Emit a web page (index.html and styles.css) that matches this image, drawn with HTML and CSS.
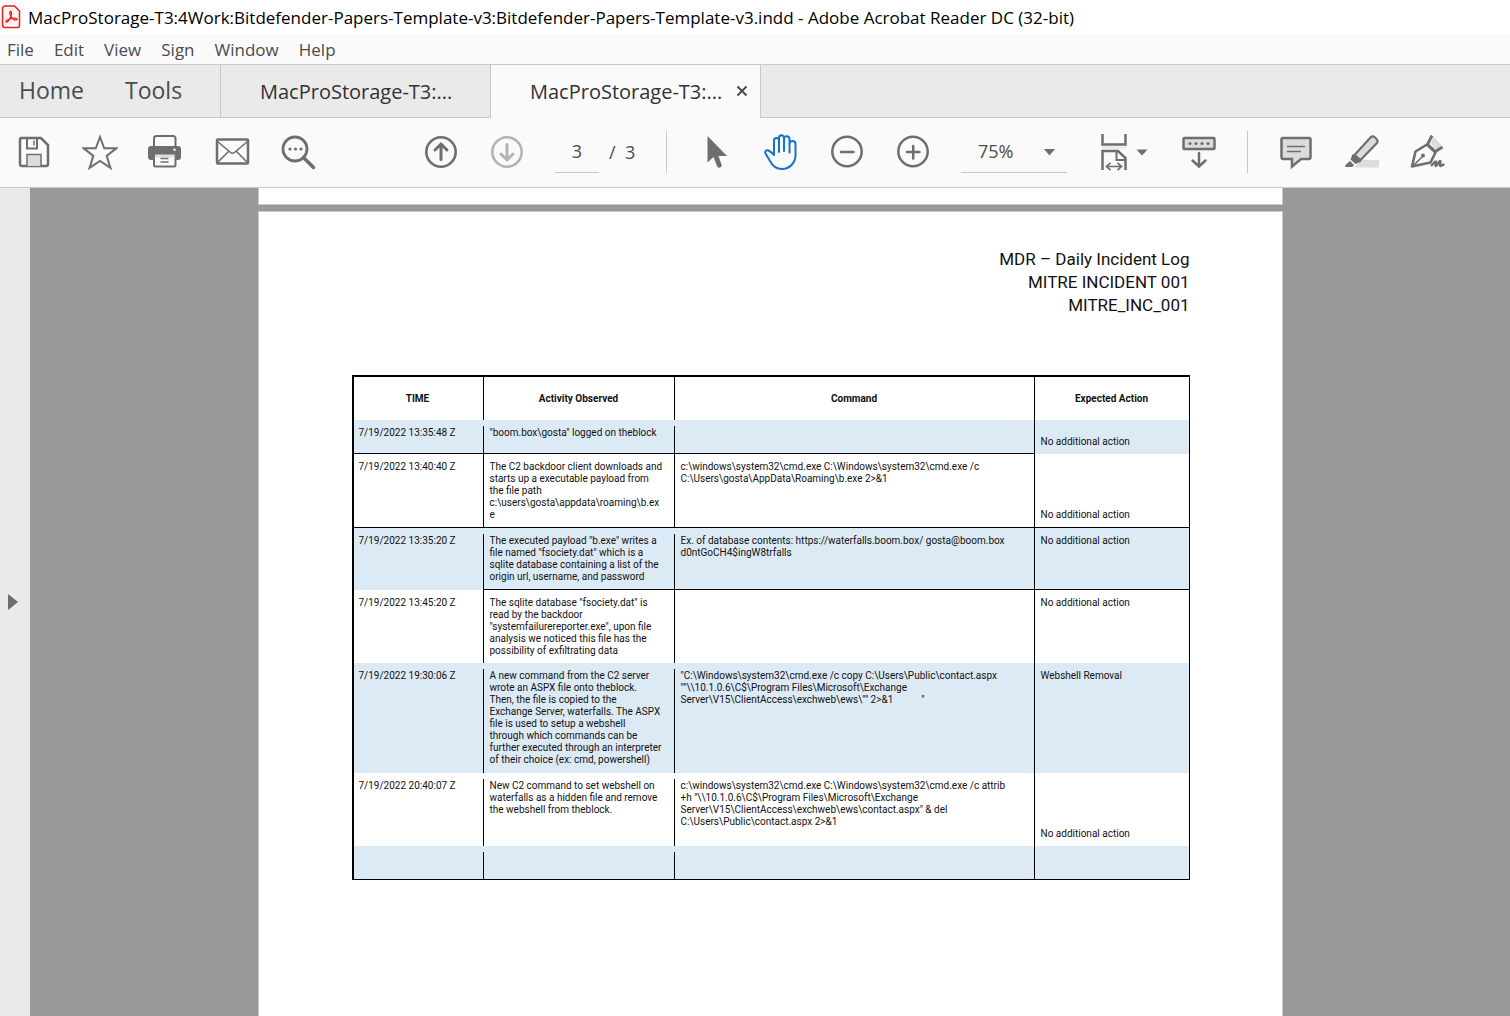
FILE: index.html
```html
<!DOCTYPE html>
<html lang="en">
<head>
<meta charset="utf-8">
<title>Adobe Acrobat Reader DC (32-bit)</title>
<link rel="stylesheet" href="styles.css">
</head>
<body>
<div class="app">
  <header class="titlebar">
    <svg class="app-icon" width="20" height="24" viewBox="0 0 20 24" fill="none" stroke="#f01e14">
      <path d="M4 1h9.500l5 5v14.500a2 2 0 0 1-2 2H4a2.500 2.500 0 0 1-2.500-2.500V3.500A2.500 2.500 0 0 1 4 1z" fill="#fff5f5" stroke-width="1.500"/>
      <path d="M9.700 6.500c-1.300 0-1.200 1.900-.3 3.800 1.200 2.700 3.400 4.800 5.400 4.900 1.700 0 1.400-1.900-.7-2.100-2.500-.2-5 .5-7.400 1.700-2 1-2.100 2.500-.9 2.300 1.500-.3 3.200-3.400 4.100-6 .8-2.300.9-4.600-.2-4.600z" stroke-width="1.300"/>
    </svg>
    <span class="window-title">MacProStorage-T3:4Work:Bitdefender-Papers-Template-v3:Bitdefender-Papers-Template-v3.indd - Adobe Acrobat Reader DC (32-bit)</span>
  </header>

  <nav class="menubar" aria-label="Menu">
    <button>File</button><button>Edit</button><button>View</button><button>Sign</button><button>Window</button><button>Help</button>
  </nav>

  <div class="tabs">
    <div class="tabs-home">
      <button class="home-tab">Home</button>
      <button class="home-tab">Tools</button>
    </div>
    <div class="doc-tab"><button class="doc-name">MacProStorage-T3:...</button></div>
    <div class="doc-tab active">
      <button class="doc-name">MacProStorage-T3:...</button>
      <button class="close" aria-label="Close tab"><svg width="12" height="12" viewBox="0 0 12 12" stroke="#4b4b4b" stroke-width="2"><path d="M1.500 1.500l9 9M10.500 1.500l-9 9"/></svg></button>
    </div>
  </div>

  <div class="toolbar">
    <button class="tool" aria-label="Save"><svg width="36" height="36" viewBox="0 0 36 36"><path d="M5 4h20l7 7v19a2 2 0 0 1-2 2H6a2 2 0 0 1-2-2V5z" fill="none" stroke="#6e6e6e" stroke-width="2.500"/><path d="M11 4v10.500h10V4" fill="none" stroke="#6e6e6e" stroke-width="2"/><path d="M18 6.500v5" stroke="#6e6e6e" stroke-width="1.500"/><path d="M11 32V20.500h14V32" fill="#dcdcdc" stroke="#6e6e6e" stroke-width="1.500"/></svg></button>
    <button class="tool" aria-label="Add to starred"><svg width="36" height="36" viewBox="0 0 36 36"><path d="M18 3l4.200 11.300h12l-9.500 7.600 3.700 12L18 27l-10.400 6.900 3.700-12-9.500-7.600h12z" fill="none" stroke="#6e6e6e" stroke-width="2"/></svg></button>
    <button class="tool" aria-label="Print"><svg width="36" height="36" viewBox="0 0 36 36"><path d="M6 13V4.500A2.500 2.500 0 0 1 8.500 2h16.500A2.500 2.500 0 0 1 27.500 4.500V13" fill="none" stroke="#6e6e6e" stroke-width="2"/><path d="M0 15a3 3 0 0 1 3-3h27a3 3 0 0 1 3 3v8a3 3 0 0 1-3 3H3a3 3 0 0 1-3-3z" fill="#6e6e6e"/><path d="M6 20h21.500v11a1.500 1.500 0 0 1-1.500 1.500H7.500A1.500 1.500 0 0 1 6 31z" fill="#fafafa" stroke="#6e6e6e" stroke-width="2"/><path d="M7 20.500h19.500v3H7z" fill="#dcdcdc"/><path d="M12.500 24.500h8M12.500 28h8" stroke="#6e6e6e" stroke-width="1.300"/><circle cx="26.500" cy="15.800" r="1.200" fill="#fff"/></svg></button>
    <button class="tool" aria-label="Email"><svg width="36" height="36" viewBox="0 0 36 36" fill="none" stroke="#6e6e6e"><rect x="3" y="5.500" width="31" height="24" rx="1" stroke-width="2.500"/><path d="M3.500 7.500L16 18q2.500 2.500 5 0L33.500 7.500M4 28l10.500-10.500M33 28L22.500 17.500" stroke-width="1.600"/></svg></button>
    <button class="tool" aria-label="Find text"><svg width="36" height="36" viewBox="0 0 36 36"><circle cx="15" cy="15" r="12" fill="none" stroke="#6e6e6e" stroke-width="2.800"/><path d="M23.500 23.500l10 10" stroke="#6e6e6e" stroke-width="3.500" stroke-linecap="round"/><g fill="#6e6e6e"><circle cx="10" cy="15" r="1.600"/><circle cx="15.500" cy="15" r="1.600"/><circle cx="21" cy="15" r="1.600"/></g></svg></button>

    <button class="tool nav-start" aria-label="Previous page"><svg width="36" height="36" viewBox="0 0 36 36" fill="none" stroke="#6e6e6e" stroke-width="2.600" stroke-linecap="round"><circle cx="18" cy="18" r="14.700"/><path d="M18 25.500V11M12 16l6-6 6 6" stroke-width="3"/></svg></button>
    <button class="tool" aria-label="Next page" disabled><svg width="36" height="36" viewBox="0 0 36 36" fill="none" stroke="#b3b3b3" stroke-width="2.600" stroke-linecap="round"><circle cx="18" cy="18" r="14.700"/><path d="M18 10.500V25M12 20l6 6 6-6" stroke-width="3"/></svg></button>
    <div class="page-nav">
      <input class="page-number" type="text" value="3" aria-label="Page number">
      <span class="page-total">/&nbsp; 3</span>
    </div>
    <span class="divider"></span>
    <button class="tool" aria-label="Select"><svg width="36" height="36" viewBox="0 0 36 36" fill="#6e6e6e"><path d="M10.500 2v26.500l6-5.500 3.500 9a2.300 2.300 0 0 0 4.500-1.500L21.500 22H30z"/></svg></button>
    <button class="tool" aria-label="Hand tool"><svg width="36" height="36" viewBox="0 0 36 36" fill="none" stroke="#1473d2" stroke-width="2" stroke-linecap="round" stroke-linejoin="round"><path d="M11 21V6.500a2.500 2.500 0 0 1 5 0V18M16 18V3.800a2.500 2.500 0 0 1 5 0V17M21 17V5a2.500 2.500 0 0 1 5.500 0V18.500M26.500 18.500V10a2.800 2.800 0 0 1 6 0v11c0 8-6 14-13.500 14-6 0-9.500-3-12-8L2.500 19.500c-1-2.500 1-4 3-3 2.500 1.200 3.500 2.500 5.500 4.500"/></svg></button>
    <button class="tool" aria-label="Zoom out"><svg width="36" height="36" viewBox="0 0 36 36" fill="none" stroke="#6e6e6e" stroke-width="2.500" stroke-linecap="round"><circle cx="18" cy="17.500" r="14.700"/><path d="M12 18h12.500"/></svg></button>
    <button class="tool" aria-label="Zoom in"><svg width="36" height="36" viewBox="0 0 36 36" fill="none" stroke="#6e6e6e" stroke-width="2.500" stroke-linecap="round"><circle cx="18" cy="17.500" r="14.700"/><path d="M12 18h12.500M18.200 12v12.500"/></svg></button>
    <div class="zoom">
      <select class="zoom-level" aria-label="Zoom level"><option>75%</option></select>
      <svg class="zoom-arrow" width="11" height="7" viewBox="0 0 11 7"><path d="M0 0h11L5.500 6.500z" fill="#6e6e6e"/></svg>
    </div>
    <button class="tool wide" aria-label="Page display"><svg width="54" height="38" viewBox="0 0 54 38" fill="none" stroke="#6e6e6e" stroke-width="2.500"><path d="M5.500 1v10.500h23V1M5.500 37V18H21l7.500 7v12"/><path d="M19.500 18v9h9" stroke-width="2"/><path d="M5 14.500h24" stroke="#e4e4e4" stroke-width="2"/><path d="M10.500 33.500h13M13.500 29.800l-4 3.700 4 3.700M20.500 29.800l4 3.700-4 3.700" stroke-width="1.700"/><path d="M39.500 16.500h11l-5.500 6z" fill="#6e6e6e" stroke="none"/></svg></button>
    <button class="tool" aria-label="Hide toolbar"><svg width="36" height="36" viewBox="0 0 36 36" fill="none" stroke="#6e6e6e" stroke-width="2.500"><rect x="2.500" y="4" width="31" height="11" rx="1" fill="#dcdcdc"/><g fill="#6e6e6e" stroke="none"><circle cx="9" cy="9.500" r="1.600"/><circle cx="15" cy="9.500" r="1.600"/><circle cx="21" cy="9.500" r="1.600"/><circle cx="27" cy="9.500" r="1.600"/></g><path d="M18 19v13M11.500 26.500l6.500 6 6.500-6" stroke-linecap="round"/></svg></button>
    <span class="divider"></span>
    <button class="tool" aria-label="Add comment"><svg width="36" height="36" viewBox="0 0 36 36" stroke="#6e6e6e"><path d="M5 4h26a1.500 1.500 0 0 1 1.500 1.500v18A1.500 1.500 0 0 1 31 25h-8l-9 7.500V25H5a1.500 1.500 0 0 1-1.500-1.500v-18A1.500 1.500 0 0 1 5 4z" fill="#dcdcdc" stroke-width="2.500"/><path d="M9 12.500h18M9 17.500h14" stroke-width="1.500"/></svg></button>
    <button class="tool" aria-label="Highlight text"><svg width="36" height="36" viewBox="0 0 36 36" stroke="#6e6e6e"><path d="M18 26h17v7.500H10z" fill="#dcdcdc" stroke="none"/><path d="M10.500 21L26.500 3.500c1.500-1.500 3-1.300 4.500 0l1.500 1.500c1.500 1.500 1.300 3 0 4.500L16.500 26z" fill="#dcdcdc" stroke-width="2.200"/><path d="M8.500 20l9 7.500-6 2.500-5-4.500zM6 27l4 4-1.500 2H2c-1.500 0-1-1.500 0-2.500z" fill="#6e6e6e" stroke="none"/></svg></button>
    <button class="tool" aria-label="Sign"><svg width="36" height="36" viewBox="0 0 36 36" fill="none" stroke="#6e6e6e" stroke-width="2.600"><path d="M21 10l2-8 9 10-5 4z" fill="#dcdcdc" stroke="none"/><path d="M2 32.500L5.500 17.500 17 10.500l8.500 8-5 10z" stroke-linejoin="round"/><path d="M3 32l10-10" stroke-width="1.600"/><circle cx="13" cy="21.500" r="1.900" fill="#6e6e6e" stroke="none"/><path d="M22 1.500l-4.500 9 8 7 7-4.500" stroke-width="2.800"/><path d="M21 32c2-2 4-5 5-4.500s-1.500 4.500 0 4.500 2.500-5 4-5-1 5 .5 5 1.500-1.500 4-1.500" stroke-width="2.400"/></svg></button>
  </div>

  <div class="workspace">
    <button class="side-toggle" aria-label="Show navigation pane"><svg width="10" height="16" viewBox="0 0 10 16"><path d="M0 0l10 8-10 8z" fill="#6e6e6e"/></svg></button>
    <main class="viewer">
      <div class="sheet sheet-end"></div>
      <article class="sheet">
        <h1 class="doc-heading">MDR – Daily Incident Log<br>MITRE INCIDENT 001<br>MITRE_INC_001</h1>
        <table class="log">
          <colgroup><col class="col-time"><col class="col-activity"><col><col class="col-action"></colgroup>
          <thead>
            <tr><th>TIME</th><th>Activity Observed</th><th>Command</th><th>Expected Action</th></tr>
          </thead>
          <tbody>
            <tr class="short shaded">
              <td class="ruled">7/19/2022 13:35:48 Z</td>
              <td class="ruled">"boom.box\gosta" logged on theblock</td>
              <td class="ruled"></td>
              <td class="low">No additional action</td>
            </tr>
            <tr class="tall joined">
              <td class="ruled">7/19/2022 13:40:40 Z</td>
              <td class="ruled">The C2 backdoor client downloads and<br>starts up a executable payload from<br>the file path<br>c:\users\gosta\appdata\roaming\b.ex<br>e</td>
              <td class="ruled">c:\windows\system32\cmd.exe C:\Windows\system32\cmd.exe /c<br>C:\Users\gosta\AppData\Roaming\b.exe 2&gt;&amp;1</td>
              <td class="ruled low">No additional action</td>
            </tr>
            <tr class="medium shaded">
              <td>7/19/2022 13:35:20 Z</td>
              <td class="ruled">The executed payload "b.exe" writes a<br>file named "fsociety.dat" which is a<br>sqlite database containing a list of the<br>origin url, username, and password</td>
              <td class="ruled">Ex. of database contents: https://waterfalls.boom.box/ gosta@boom.box<br>d0ntGoCH4$ingW8trfalls</td>
              <td class="ruled">No additional action</td>
            </tr>
            <tr class="tall joined">
              <td>7/19/2022 13:45:20 Z</td>
              <td>The sqlite database "fsociety.dat" is<br>read by the backdoor<br>"systemfailurereporter.exe", upon file<br>analysis we noticed this file has the<br>possibility of exfiltrating data</td>
              <td></td>
              <td>No additional action</td>
            </tr>
            <tr class="tallest shaded">
              <td>7/19/2022 19:30:06 Z</td>
              <td>A new command from the C2 server<br>wrote an ASPX file onto theblock.<br>Then, the file is copied to the<br>Exchange Server, waterfalls. The ASPX<br>file is used to setup a webshell<br>through which commands can be<br>further executed through an interpreter<br>of their choice (ex: cmd, powershell)</td>
              <td>"C:\Windows\system32\cmd.exe /c copy C:\Users\Public\contact.aspx<br>""\\10.1.0.6\C$\Program Files\Microsoft\Exchange<br>Server\V15\ClientAccess\exchweb\ews\"" 2&gt;&amp;1<span class="tab-stop">"</span></td>
              <td>Webshell Removal</td>
            </tr>
            <tr class="tall">
              <td>7/19/2022 20:40:07 Z</td>
              <td>New C2 command to set webshell on<br>waterfalls as a hidden file and remove<br>the webshell from theblock.</td>
              <td>c:\windows\system32\cmd.exe C:\Windows\system32\cmd.exe /c attrib<br>+h "\\10.1.0.6\C$\Program Files\Microsoft\Exchange<br>Server\V15\ClientAccess\exchweb\ews\contact.aspx" &amp; del<br>C:\Users\Public\contact.aspx 2&gt;&amp;1</td>
              <td class="low">No additional action</td>
            </tr>
            <tr class="short shaded">
              <td class="ruled"></td><td class="ruled"></td><td class="ruled"></td><td class="ruled"></td>
            </tr>
          </tbody>
        </table>
      </article>
    </main>
  </div>
</div>
</body>
</html>
```
FILE: styles.css
```css
* { box-sizing: border-box; }

body {
  margin: 0;
  font-family: "Open Sans", "Noto Sans", sans-serif;
  color: #4b4b4b;
}

button, input, select {
  margin: 0;
  padding: 0;
  border: 0;
  background: none;
  color: inherit;
  font: inherit;
}

svg { display: block; }

.app {
  display: flex;
  flex-direction: column;
  height: 100vh;
  background: #fafafa;
}

.titlebar {
  display: flex;
  align-items: center;
  gap: 7px;
  height: 34px;
  padding-left: 1px;
  background: #fff;
  color: #000;
  font-size: 17px;
  white-space: nowrap;
}

.menubar {
  display: flex;
  gap: 20px;
  height: 30px;
  padding-left: 7px;
  font-size: 17px;
}

/* Tab strip */
.tabs {
  display: flex;
  height: 54px;
  border-top: 1px solid #c8c8c8;
  border-bottom: 1px solid #c8c8c8;
  background: #eaeaea;
}

.tabs-home {
  display: flex;
  gap: 41px;
  width: 221px;
  padding: 0 0 2px 19px;
  border-right: 1px solid #c8c8c8;
  font-size: 23px;
}

.doc-tab {
  display: flex;
  align-items: center;
  gap: 14px;
  width: 270px;
  padding-left: 39px;
  border-right: 1px solid #c8c8c8;
  color: #323232;
  font-size: 20px;
}

/* The open tab covers the strip's bottom border. */
.doc-tab.active {
  height: 53px;
  padding-bottom: 1px;
  background: #fafafa;
}

/* Toolbar */
.toolbar {
  display: flex;
  flex-shrink: 0;
  align-items: center;
  gap: 30px;
  height: 70px;
  padding: 0 0 2px 16px;
  border-bottom: 1px solid #c8c8c8;
}

.tool {
  display: flex;
  flex: none;
  justify-content: center;
  width: 36px;
}

.tool.wide { width: 54px; }

.nav-start { margin-left: 77px; }

.divider {
  flex: none;
  width: 1px;
  height: 42px;
  background: #c8c8c8;
}

.page-nav {
  display: flex;
  flex: none;
  gap: 10px;
  width: 81px;
  font-size: 18px;
  line-height: 42px;
  white-space: nowrap;
}

.page-number {
  width: 44px;
  height: 42px;
  border-bottom: 1px solid #c8c8c8;
  text-align: center;
}

.zoom {
  position: relative;
  flex: none;
  width: 106px;
}

.zoom-level {
  display: block;
  width: 100%;
  height: 42px;
  padding-left: 17px;
  border-bottom: 1px solid #c8c8c8;
  border-radius: 0;
  appearance: none;
  font-size: 18px;
}

.zoom-arrow {
  position: absolute;
  top: 18px;
  right: 12px;
  pointer-events: none;
}

/* Document area */
.workspace {
  display: flex;
  flex: 1;
  min-height: 0;
}

.side-toggle {
  display: flex;
  flex: none;
  align-items: center;
  width: 30px;
  padding-left: 8px;
  background: #eaeaea;
}

.viewer {
  display: flex;
  flex: 1;
  flex-direction: column;
  align-items: center;
  gap: 6px;
  overflow: auto;
  scrollbar-width: none;
  background: #999;
}

.sheet {
  flex: none;
  width: 1025px;
  min-height: 1325px;
  padding: 36px 92px 36px 93px;
  border: 1px solid #c8c8c8;
  background: #fff;
  color: #111;
  font-family: Roboto, sans-serif;
}

.sheet-end {
  min-height: 17px;
  padding: 0;
  border-top: 0;
}

.doc-heading {
  margin: 0 0 58px;
  font-size: 17px;
  font-weight: 400;
  line-height: 23px;
  text-align: right;
}

.log {
  width: 100%;
  table-layout: fixed;
  border-collapse: separate;
  border-spacing: 0;
  border-top: 2px solid #000;
  border-right: 1px solid #000;
  font-size: 10px;
  line-height: 12px;
}

.col-time { width: 131px; }
.col-activity { width: 191px; }
.col-action { width: 155px; }

/* The rule on each cell's left edge starts below the row's top padding. */
.log th,
.log td {
  padding: 7px 6px 6px 7px;
  background: linear-gradient(#000, #000) left bottom / 1px calc(100% - 6px) no-repeat;
  text-align: left;
  vertical-align: top;
  white-space: nowrap;
}

.log th {
  height: 43px;
  background-size: 1px 100%;
  font-weight: 700;
  text-align: center;
  vertical-align: middle;
}

.log th:first-child,
.log td:first-child { background-size: 2px 100%; }

.log td:last-child,
.log .joined td { background-size: 1px 100%; }

.log .joined td:first-child { background-size: 2px 100%; }

.log .shaded td { background-color: #dceaf5; }
.log td.ruled { border-bottom: 1px solid #000; }
.log td.low { vertical-align: bottom; }

.log .short td { height: 34px; }
.log .medium td { height: 62px; }
.log .tall td { height: 73px; }
.log .tallest td { height: 110px; }

.tab-stop { margin-left: 28px; }
```
